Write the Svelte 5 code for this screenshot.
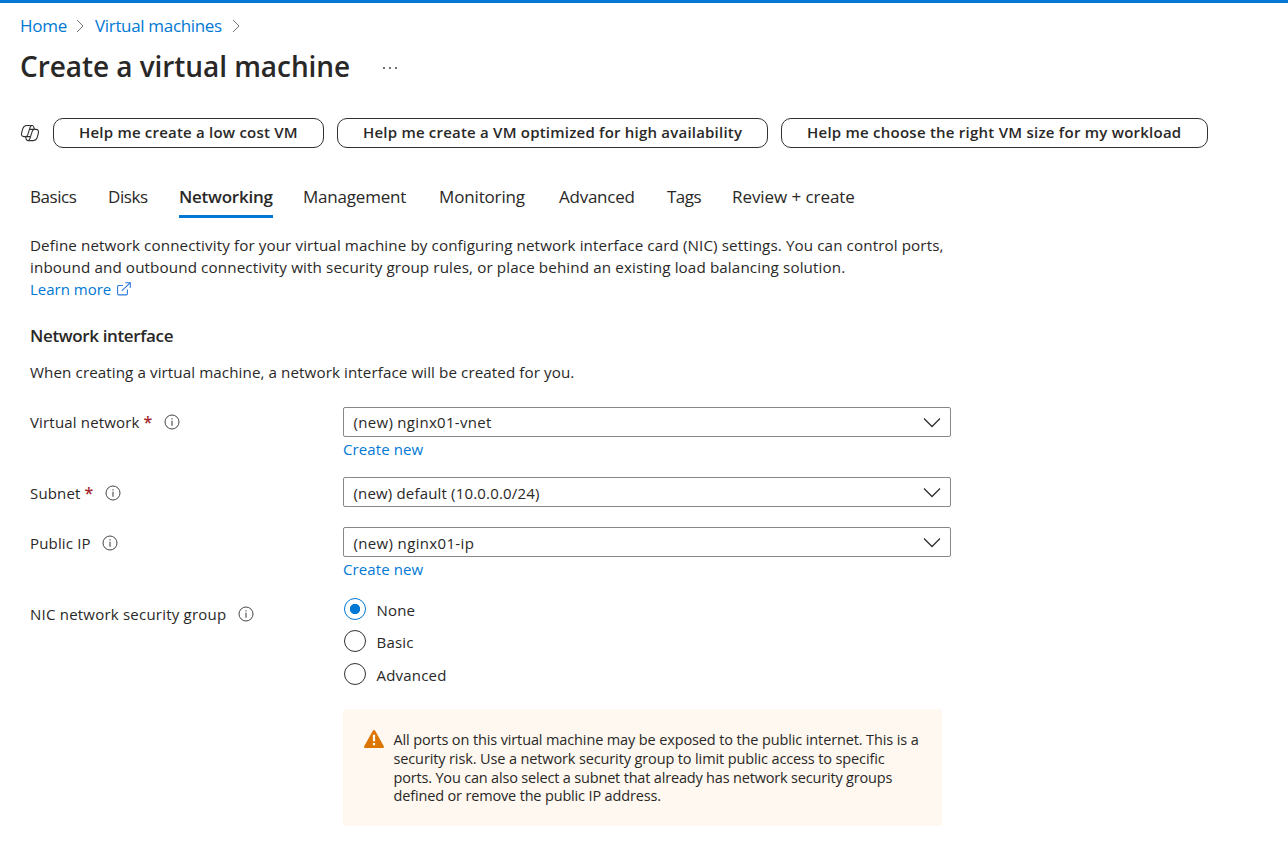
<script>
  const tabs = [
    ['Basics', 'basics'], ['Disks', 'disks'], ['Networking', 'networking'], ['Management', 'management'],
    ['Monitoring', 'monitoring'], ['Advanced', 'advanced'], ['Tags', 'tags'], ['Review + create', 'review']
  ];
  const options = ['None', 'Basic', 'Advanced'];
  let tab = $state('Networking');
  let nsg = $state('None');
</script>

{#snippet info()}
  <svg class="info" width="16" height="16" viewBox="0 0 16 16" fill="none" stroke="#484644">
    <circle cx="8" cy="8" r="7" />
    <path d="M8 6.7v5M8 4.2v1.2" stroke-width="1.1" />
  </svg>
{/snippet}

{#snippet crumbArrow()}
  <svg width="8" height="14" viewBox="0 0 8 14" fill="none" stroke="#77716d"><path d="M1 1l6 6-6 6" /></svg>
{/snippet}

{#snippet dropdown(value, cls)}
  <button class="select">
    <span class={cls}>{value}</span>
    <svg width="18" height="11" viewBox="0 0 18 11" fill="none" stroke="#323130" stroke-width="1.3"><path d="M1 1.5l8 8 8-8" /></svg>
  </button>
{/snippet}

<div class="page">
  <nav class="crumbs">
    <a class="home" href="#home">Home</a>{@render crumbArrow()}
    <a class="vms" href="#vms">Virtual machines</a>{@render crumbArrow()}
  </nav>
  <header>
    <h1>Create a virtual machine</h1>
    <svg width="16" height="4" viewBox="0 0 16 4" fill="#323130"><circle cx="2" cy="2" r=".9" /><circle cx="8" cy="2" r=".9" /><circle cx="14" cy="2" r=".9" /></svg>
  </header>

  <div class="helpers">
    <svg width="20" height="18" viewBox="0 0 20 18" fill="none" stroke="#323130" stroke-width="1.1" stroke-linejoin="round">
      <path d="M6.6 1.5H12c1 0 1.5.6 1.8 1.6l.6 2.2M6.6 1.5C4.6 1.5 3.4 2.8 2.8 4.7L1.7 8.6c-.7 2.4.2 4 2.3 4h1.8c1 0 1.6-.7 2-1.9l2.3-7.3c.4-1.3.9-1.9 1.9-1.9" />
      <path d="M13.4 16.6H8c-1 0-1.5-.6-1.8-1.6l-.6-2.4M13.4 16.6c2 0 3.2-1.3 3.8-3.2l1.1-3.9c.7-2.4-.2-4.1-2.3-4.1h-1.8c-1 0-1.6.7-2 1.9L9.9 14.7c-.4 1.3-.9 1.9-1.9 1.9" />
      <path d="M9.5 5.4h4.7M5.8 12.6h4.7" />
    </svg>
    <button class="low"><span>Help me create a low cost VM</span></button>
    <button class="high"><span>Help me create a VM optimized for high availability</span></button>
    <button class="size"><span>Help me choose the right VM size for my workload</span></button>
  </div>

  <div class="tabs" role="tablist">
    {#each tabs as [name, cls]}
      <button role="tab" aria-selected={tab === name} class={cls} class:active={tab === name} onclick={() => (tab = name)}>{name}</button>
    {/each}
  </div>

  <main>
    <p class="intro">
      <span class="i1">Define network connectivity for your virtual machine by configuring network interface card (NIC) settings. You can control ports,</span>
      <span class="i2">inbound and outbound connectivity with security group rules, or place behind an existing load balancing solution.</span>
      <a class="learn" href="#learn">Learn more
        <svg width="14" height="14" viewBox="0 0 14 14" fill="none" stroke="#2f78dc" stroke-width="1.1"><path d="M6 3.5H1.8c-.7 0-1.2.4-1.2 1.1v7.2c0 .7.5 1.1 1.2 1.1h7.4c.7 0 1.2-.4 1.2-1.1V7.5M4.8 8.8L13 .8M8.3.7h5v5" /></svg>
      </a>
    </p>
    <h2>Network interface</h2>
    <p class="note"><span>When creating a virtual machine, a network interface will be created for you.</span></p>

    <div class="field vnet">
      <div class="label"><span class="l1">Virtual network</span><b>*</b>{@render info()}</div>
      <div class="control">{@render dropdown('(new) nginx01-vnet', 's1')}<a class="create" href="#vnet">Create new</a></div>
    </div>
    <div class="field subnet">
      <div class="label"><span class="l2">Subnet</span><b>*</b>{@render info()}</div>
      <div class="control">{@render dropdown('(new) default (10.0.0.0/24)', 's2')}</div>
    </div>
    <div class="field ip">
      <div class="label"><span class="l3">Public IP</span>{@render info()}</div>
      <div class="control">{@render dropdown('(new) nginx01-ip', 's3')}<a class="create" href="#ip">Create new</a></div>
    </div>
    <div class="field nsg">
      <div class="label"><span class="l4">NIC network security group</span>{@render info()}</div>
      <div class="control radios" role="radiogroup">
        {#each options as option}
          <button role="radio" aria-checked={nsg === option} onclick={() => (nsg = option)}>
            <i class:on={nsg === option}></i><span>{option}</span>
          </button>
        {/each}
      </div>
    </div>

    <aside>
      <svg width="20" height="18" viewBox="0 0 20 18"><path d="M8.8.8q1.2-1.4 2.4 0l8.6 15.4q.5 1.6-1 1.7H1.2q-1.6-.1-1-1.7z" fill="#db7500" /><path d="M10 4.8v6.5M10 13v2.3" stroke="#fff" stroke-width="2.2" /></svg>
      <p>
        <span class="w1">All ports on this virtual machine may be exposed to the public internet. This is a</span>
        <span class="w2">security risk. Use a network security group to limit public access to specific</span>
        <span class="w3">ports. You can also select a subnet that already has network security groups</span>
        <span class="w4">defined or remove the public IP address.</span>
      </p>
    </aside>
  </main>
</div>

<style>
  :global(body) { background: #fff; }
  .page { box-sizing: border-box; width: 1288px; height: 853px; overflow: hidden; border-top: 3px solid #0078d4; background: #fff; color: #292827; font: 15px/22px "Open Sans", "Noto Sans", sans-serif; white-space: nowrap; }
  a { color: #0078d4; text-decoration: none; }
  button { font: inherit; color: inherit; background: none; border: 0; padding: 0; margin: 0; text-align: left; white-space: nowrap; }
  p, h1, h2 { margin: 0; }
  svg { display: block; flex: none; }
  .crumbs { display: flex; align-items: center; height: 24px; margin: 11px 0 0 20px; font-size: 17px; }
  .crumbs a { flex: none; }
  .home { width: 56px; letter-spacing: -.25px; }
  .vms { width: 137px; letter-spacing: -.33px; }
  .crumbs svg { margin-right: 11px; }
  header { display: flex; align-items: center; height: 40px; margin: 8px 0 0 20px; }
  header svg { margin-top: 4px; }
  h1 { width: 362px; font-size: 28px; line-height: 40px; font-weight: 600; letter-spacing: -.06px; }
  .helpers { display: flex; align-items: center; height: 30px; margin: 32px 0 0 20px; }
  .helpers button { box-sizing: border-box; height: 30px; border: 1px solid #323130; border-radius: 10px; padding: 0 0 2px 25px; font-weight: 600; line-height: 26px; letter-spacing: .21px; flex: none; }
  .helpers .low { width: 271px; margin-left: 13px; }
  .helpers .high { width: 431px; margin-left: 13px; }
  .helpers .size { width: 427px; margin-left: 13px; letter-spacing: .24px; }
  .tabs { display: flex; height: 38px; margin: 32px 0 0 30px; }
  .tabs button { box-sizing: border-box; flex: none; font-size: 17px; line-height: 34px; height: 38px; padding-bottom: 1px; border-bottom: 3px solid transparent; }
  .tabs .active { font-weight: 600; border-bottom-color: #0078d4; }
  .tabs .basics { width: 46px; margin-right: 32px; letter-spacing: -.45px; }
  .tabs .disks { width: 39px; margin-right: 32px; letter-spacing: -.4px; }
  .tabs .networking { width: 94px; margin-right: 30px; letter-spacing: -.25px; }
  .tabs .management { width: 103px; margin-right: 33px; letter-spacing: -.2px; }
  .tabs .monitoring { width: 86px; margin-right: 34px; letter-spacing: -.15px; }
  .tabs .advanced { width: 76px; margin-right: 32px; letter-spacing: -.25px; }
  .tabs .tags { width: 34px; margin-right: 31px; letter-spacing: -.5px; }
  .tabs .review { letter-spacing: -.07px; }
  main { padding-left: 30px; }
  .intro { display: flex; flex-direction: column; align-items: flex-start; padding-top: 16px; }
  .i1 { font-size: 15.2px; letter-spacing: .103px; }
  .i2 { font-size: 15.2px; letter-spacing: .12px; }
  .learn { display: flex; align-items: center; gap: 6px; }
  h2 { font-size: 17px; line-height: 24px; font-weight: 600; margin-top: 24px; letter-spacing: -.36px; }
  .note { margin-top: 13px; font-size: 15.2px; letter-spacing: .08px; }
  .field { display: flex; }
  .label { display: flex; align-items: center; width: 313px; height: 30px; letter-spacing: .17px; }
  .l4 { letter-spacing: .22px; }
  .label b { color: #a4262c; font-size: 16px; font-weight: 600; line-height: 20px; margin-left: 4px; letter-spacing: 0; }
  .info { margin: 0 0 0 11.5px; }
  .control { display: flex; flex-direction: column; align-items: flex-start; }
  .select { box-sizing: border-box; display: flex; align-items: center; justify-content: space-between; width: 608px; height: 30px; border: 1px solid #8a8886; border-radius: 2px; padding: 0 9px 0 9.5px; }
  .s1 { letter-spacing: .31px; }
  .s2 { letter-spacing: .17px; padding-top: 2px; }
  .s3 { letter-spacing: .35px; padding-top: 2px; }
  .create { margin-top: 1px; letter-spacing: .1px; }
  .vnet { height: 70px; margin-top: 24px; }
  .subnet { height: 50px; }
  .ip { height: 70px; }
  .subnet .label, .ip .label { margin-top: 1px; }
  .nsg { height: 112px; }
  .nsg .label { margin-top: 2px; }
  .radios { padding: 0 0 0 1px; }
  .radios button { display: flex; align-items: center; height: 32.5px; }
  .radios button:first-child { height: 24px; margin-bottom: 4px; }
  .radios span { padding-top: 2px; letter-spacing: .2px; }
  .radios i { box-sizing: border-box; width: 22px; height: 22px; border: 1px solid #323130; border-radius: 50%; margin-right: 10.5px; }
  .radios i.on { border-color: #0078d4; background: radial-gradient(circle, #0078d4 4.8px, #fff 5.5px); }
  aside { box-sizing: border-box; display: flex; width: 599px; height: 117px; margin-left: 313px; background: #fff8f0; padding: 21px 21px; border-radius: 2px; }
  aside p { display: flex; flex-direction: column; align-items: flex-start; margin: 1px 0 0 9.5px; font-size: 14.5px; line-height: 18.8px; letter-spacing: -.125px; }
  .w3 { letter-spacing: -.18px; }
  .w4 { letter-spacing: -.16px; }
</style>
